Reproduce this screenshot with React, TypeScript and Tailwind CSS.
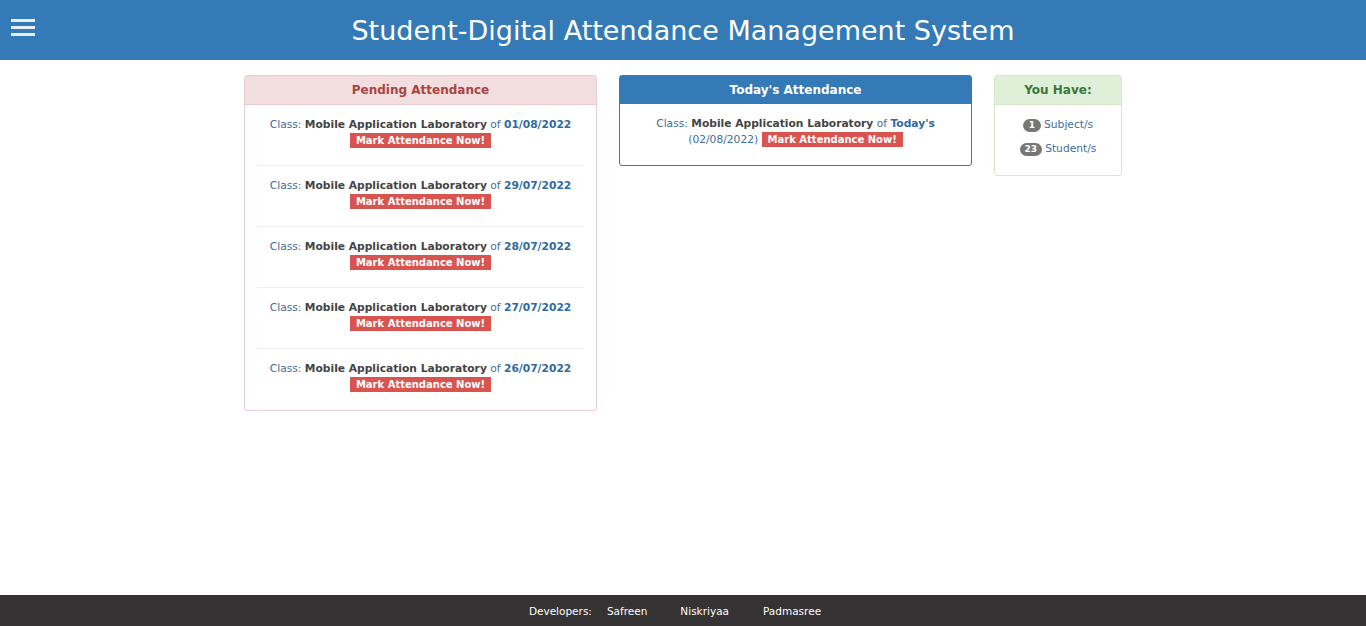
const pending = ["01/08/2022", "29/07/2022", "28/07/2022", "27/07/2022", "26/07/2022"];

function MarkBadge() {
  return (
    <span className="inline-block bg-[#d9534f] px-[6px] text-[10px] leading-[15px] font-bold text-white">
      Mark Attendance Now!
    </span>
  );
}

function ClassLine({ date, today }: { date: string; today?: boolean }) {
  return (
    <>
      <span className="text-[#3f6d99]">Class: </span>
      <b className="text-[#444]">Mobile Application Laboratory</b>
      <span className="text-[#3f6d99]"> of </span>
      <b className="text-[#2f6aa0]">{today ? "Today's" : date}</b>
    </>
  );
}

export default function App() {
  return (
    <div className="flex min-h-[626px] flex-col bg-white font-['DejaVu_Sans',Verdana,sans-serif]">
      <header className="relative flex h-[60px] items-center justify-center bg-[#337ab7]">
        <button className="absolute left-[11px] top-[19px] flex w-[24px] flex-col gap-[4px]">
          <span className="h-[3px] w-full bg-[#e8eef6]" />
          <span className="h-[3px] w-full bg-[#e8eef6]" />
          <span className="h-[3px] w-full bg-[#e8eef6]" />
        </button>
        <h1 className="pt-[2px] text-[27px] text-white">Student-Digital Attendance Management System</h1>
      </header>

      <main className="flex flex-1 items-start justify-center gap-[22px] pt-[15px] text-[10.7px]">
        <section className="w-[353px] rounded-[3px] border border-[#ebccd1]">
          <div className="flex h-[29px] items-center justify-center border-b border-[#ebccd1] bg-[#f2dede] text-[12px] font-bold text-[#a94442]">
            Pending Attendance
          </div>
          <div className="px-[12px]">
            {pending.map((d, i) => (
              <div
                key={d}
                className={
                  "flex h-[61px] flex-col items-center pt-[12px] leading-[16px] " +
                  (i < pending.length - 1 ? "border-b border-[#eee]" : "")
                }
              >
                <div><ClassLine date={d} /></div>
                <MarkBadge />
              </div>
            ))}
          </div>
        </section>

        <section className="w-[353px] rounded-[3px] border border-[#337ab7]">
          <div className="flex h-[28px] items-center justify-center bg-[#337ab7] text-[12px] font-bold text-white">
            Today's Attendance
          </div>
          <div className="px-[12px] pb-[17px] pt-[12px] text-center leading-[16px]">
            <ClassLine date="" today />
            <br />
            <span className="text-[#3f6d99]">(02/08/2022) </span>
            <MarkBadge />
          </div>
        </section>

        <section className="w-[128px] rounded-[3px] border border-[#d6e9c6]">
          <div className="flex h-[29px] items-center justify-center border-b border-[#d6e9c6] bg-[#dff0d8] text-[12px] font-bold text-[#3c763d]">
            You Have:
          </div>
          <div className="flex flex-col items-center gap-[8px] pb-[18px] pt-[12px] text-[#3f6d99]">
            <div className="flex items-center gap-[3px]">
              <span className="rounded-full bg-[#777] px-[6px] text-[9px] leading-[13px] font-bold text-white">1</span>
              Subject/s
            </div>
            <div className="flex items-center gap-[3px]">
              <span className="rounded-full bg-[#777] px-[5px] text-[9px] leading-[13px] font-bold text-white">23</span>
              Student/s
            </div>
          </div>
        </section>
      </main>

      <footer className="flex h-[31px] items-center justify-center bg-[#343232] pr-[16px] pt-[3px] text-[10.5px] text-white">
        <span className="mr-[15px]">Developers:</span>
        <span className="mr-[33px]">Safreen</span>
        <span className="mr-[34px]">Niskriyaa</span>
        <span>Padmasree</span>
      </footer>
    </div>
  );
}
